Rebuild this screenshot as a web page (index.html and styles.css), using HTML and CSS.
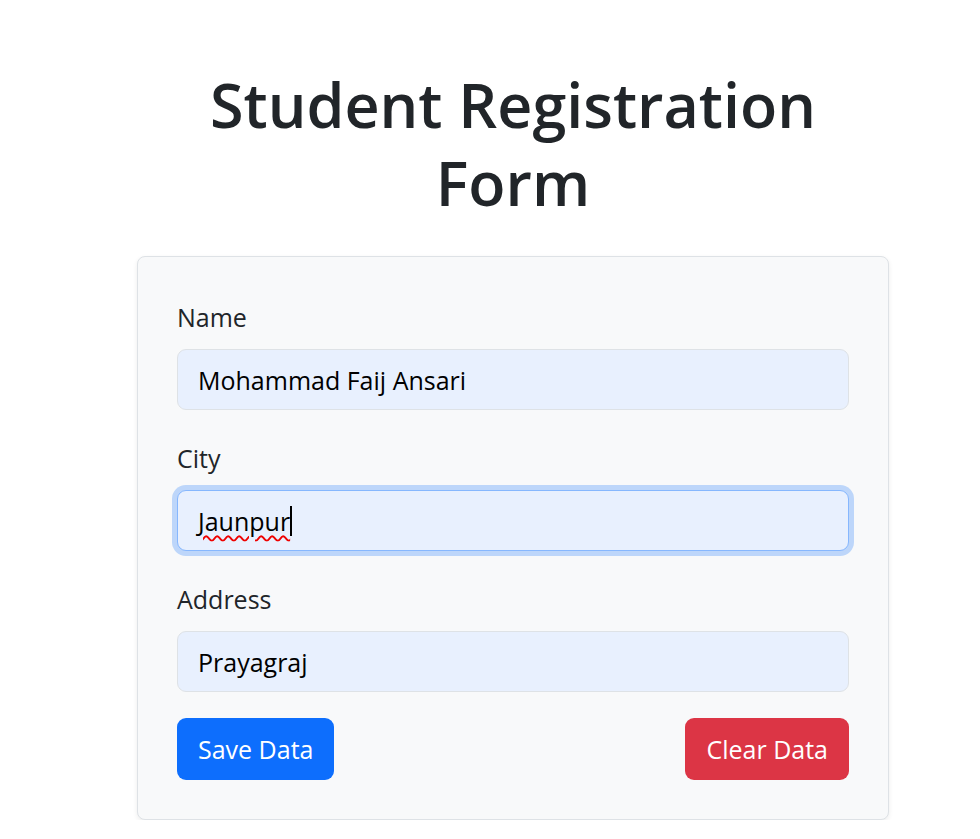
FILE: index.html
```html
<!DOCTYPE html>
<html lang="en">
<head>
<meta charset="utf-8">
<title>Student Registration Form</title>
<link rel="stylesheet" href="styles.css">
</head>
<body>
<main class="page">
  <h1 class="title">Student Registration Form</h1>
  <form class="card">
    <div class="group">
      <label class="label" for="name">Name</label>
      <input class="control" id="name" type="text" value="Mohammad Faij Ansari">
    </div>
    <div class="group">
      <label class="label" for="city">City</label>
      <div class="control focused" id="city"><span class="misspelled">Jaunpur</span><span class="caret"></span></div>
    </div>
    <div class="group last-group">
      <label class="label" for="address">Address</label>
      <input class="control" id="address" type="text" value="Prayagraj">
    </div>
    <div class="actions">
      <button type="button" class="btn btn-primary">Save Data</button>
      <button type="button" class="btn btn-danger">Clear Data</button>
    </div>
  </form>
</main>
</body>
</html>
```
FILE: styles.css
```css
* { box-sizing: border-box; }
html, body { margin: 0; padding: 0; background: #fff; }
body {
  font-family: "Open Sans", "Noto Sans", sans-serif;
  color: #212529;
}
.page {
  width: 752px;
  margin-left: 137px;
  padding-top: 66px;
}
.title {
  margin: 0 0 34px;
  text-align: center;
  font-size: 61px;
  font-weight: 600;
  line-height: 78px;
  color: #212529;
}
.card {
  background: #f8f9fa;
  border: 1px solid #dee2e6;
  border-radius: 8px;
  box-shadow: 0 2px 5px rgba(0,0,0,0.075);
  padding: 41px 39px 39px;
}
.group { display: flex; flex-direction: column; margin-bottom: 29px; }
.group.last-group { margin-bottom: 26px; }
.label {
  font-size: 25px;
  line-height: 38px;
  margin-bottom: 13px;
}
.control {
  display: flex;
  align-items: center;
  height: 61px;
  width: 100%;
  padding: 0 20px;
  border: 1px solid #dee2e6;
  border-radius: 9px;
  background: #e8f0fe;
  font-family: inherit;
  font-size: 25px;
  color: #000;
  outline: none;
}
.control.focused {
  border-color: #86b7fe;
  box-shadow: 0 0 0 5px rgba(13,110,253,0.25);
}
.misspelled {
  text-decoration: underline wavy #e00;
  text-decoration-thickness: 1.5px;
  text-underline-offset: 4px;
}
.caret {
  display: inline-block;
  width: 2px;
  height: 30px;
  background: #000;
}
.actions {
  display: flex;
  justify-content: space-between;
}
.btn {
  height: 62px;
  padding: 0 21px;
  border: none;
  border-radius: 9px;
  font-family: inherit;
  font-size: 25px;
  color: #fff;
}
.btn-primary { background: #0d6efd; }
.btn-danger { background: #dc3545; }
```
